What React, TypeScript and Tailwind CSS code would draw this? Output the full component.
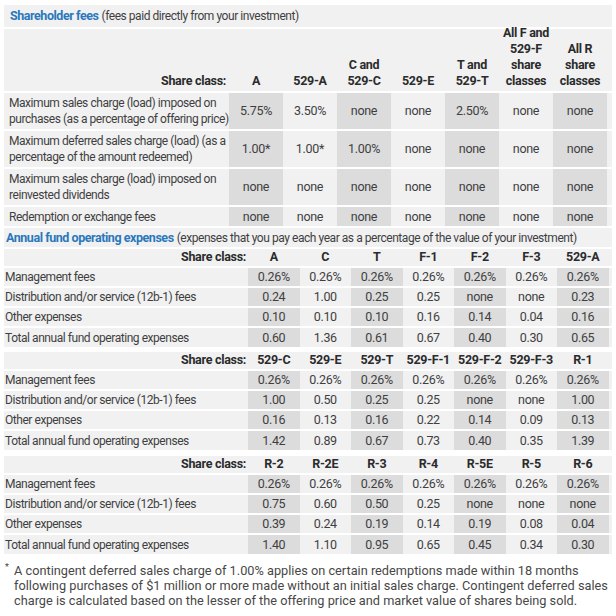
const feeHeaders = [
  ["A"],
  ["529-A"],
  ["C and", "529-C"],
  ["529-E"],
  ["T and", "529-T"],
  ["All F and", "529-F", "share", "classes"],
  ["All R", "share", "classes"],
];

const feeRows = [
  {
    label: ["Maximum sales charge (load) imposed on", "purchases (as a percentage of offering price)"],
    values: ["5.75%", "3.50%", "none", "none", "2.50%", "none", "none"],
  },
  {
    label: ["Maximum deferred sales charge (load) (as a", "percentage of the amount redeemed)"],
    values: ["1.00*", "1.00*", "1.00%", "none", "none", "none", "none"],
  },
  {
    label: ["Maximum sales charge (load) imposed on", "reinvested dividends"],
    values: ["none", "none", "none", "none", "none", "none", "none"],
  },
  {
    label: ["Redemption or exchange fees"],
    values: ["none", "none", "none", "none", "none", "none", "none"],
  },
];

const expenseLabels = [
  "Management fees",
  "Distribution and/or service (12b-1) fees",
  "Other expenses",
  "Total annual fund operating expenses",
];

const expenseTables = [
  {
    classes: ["A", "C", "T", "F-1", "F-2", "F-3", "529-A"],
    rows: [
      ["0.26%", "0.26%", "0.26%", "0.26%", "0.26%", "0.26%", "0.26%"],
      ["0.24", "1.00", "0.25", "0.25", "none", "none", "0.23"],
      ["0.10", "0.10", "0.10", "0.16", "0.14", "0.04", "0.16"],
      ["0.60", "1.36", "0.61", "0.67", "0.40", "0.30", "0.65"],
    ],
  },
  {
    classes: ["529-C", "529-E", "529-T", "529-F-1", "529-F-2", "529-F-3", "R-1"],
    rows: [
      ["0.26%", "0.26%", "0.26%", "0.26%", "0.26%", "0.26%", "0.26%"],
      ["1.00", "0.50", "0.25", "0.25", "none", "none", "1.00"],
      ["0.16", "0.13", "0.16", "0.22", "0.14", "0.09", "0.13"],
      ["1.42", "0.89", "0.67", "0.73", "0.40", "0.35", "1.39"],
    ],
  },
  {
    classes: ["R-2", "R-2E", "R-3", "R-4", "R-5E", "R-5", "R-6"],
    rows: [
      ["0.26%", "0.26%", "0.26%", "0.26%", "0.26%", "0.26%", "0.26%"],
      ["0.75", "0.60", "0.50", "0.25", "none", "none", "none"],
      ["0.39", "0.24", "0.19", "0.14", "0.19", "0.08", "0.04"],
      ["1.40", "1.10", "0.95", "0.65", "0.45", "0.34", "0.30"],
    ],
  },
];

function ExpenseTable({ classes, rows }: { classes: string[]; rows: string[][] }) {
  return (
    <div className="flex flex-col bg-[#f1f1f2]">
      {/* header row */}
      <div className="flex h-[19px] items-end pb-[1px] border-b-2 border-white text-[#2b2b2b] font-bold text-[12.5px] tracking-[-0.3px]">
        <div className="w-[244px] pr-[2px] text-right">Share class:</div>
        {classes.map((c) => (
          <div key={c} className="w-[51.5px] text-center">
            {c}
          </div>
        ))}
      </div>
      {rows.map((vals, r) => (
        <div key={r} className="flex h-[20px] border-b-2 border-white last:h-[19px] last:border-b-0">
          <div className="w-[244px] pl-[1px] flex items-center whitespace-nowrap">{expenseLabels[r]}</div>
          {vals.map((v, i) => (
            <div
              key={i}
              className={`w-[51.5px] flex items-center justify-center text-[12.5px] tracking-[-0.3px] ${i % 2 === 0 ? "bg-[#dcdcdd]" : ""}`}
            >
              {v}
            </div>
          ))}
        </div>
      ))}
    </div>
  );
}

export default function App() {
  return (
    <div className="w-[616px] h-[616px] bg-white pt-[5px] text-[12px] leading-[16px] tracking-[-0.45px] text-[#3f3f3f] font-['Roboto',sans-serif]">
      <div className="ml-[4px] w-[608px] bg-[#f1f1f2]">
        {/* Shareholder fees title */}
        <div className="h-[24px] flex items-center pl-[6px] border-b-2 border-white whitespace-nowrap">
          <span className="text-[#2a78bb] font-bold text-[12.5px] tracking-[-0.45px]">Shareholder fees</span>
          <span className="ml-[3px] text-[12px]">(fees paid directly from your investment)</span>
        </div>

        {/* share class header */}
        <div className="flex h-[64px] items-end pb-[2px] text-[#2b2b2b] font-bold text-[12.5px] tracking-[-0.3px] border-b-2 border-white">
          <div className="w-[225px] pr-[3px] text-right">Share class:</div>
          {feeHeaders.map((h, i) => (
            <div key={i} className="w-[54px] text-center leading-[16px]">
              {h.map((line) => (
                <div key={line}>{line}</div>
              ))}
            </div>
          ))}
        </div>

        {feeRows.map((row, r) => (
          <div
            key={r}
            className={`flex border-b-2 border-white ${row.label.length > 1 ? "h-[38px]" : "h-[21px]"}`}
          >
            <div className="w-[225px] pl-[5px] flex flex-col justify-center whitespace-nowrap">
              {row.label.map((l) => (
                <div key={l}>{l}</div>
              ))}
            </div>
            {row.values.map((v, i) => (
              <div
                key={i}
                className={`w-[54px] flex items-center justify-center text-[12.5px] tracking-[-0.3px] ${i % 2 === 0 ? "bg-[#dcdcdd]" : ""}`}
              >
                {v}
              </div>
            ))}
          </div>
        ))}

        {/* Annual fund operating expenses title */}
        <div className="h-[21px] flex items-center pl-[2px] border-b-2 border-white whitespace-nowrap">
          <span className="text-[#2a78bb] font-bold text-[12.5px] tracking-[-0.45px]">Annual fund operating expenses</span>
          <span className="ml-[3px] text-[12px]">
            (expenses that you pay each year as a percentage of the value of your investment)
          </span>
        </div>

        <div className="flex flex-col bg-white">
          <ExpenseTable classes={expenseTables[0].classes} rows={expenseTables[0].rows} />
          <div className="h-[5px]" />
          <ExpenseTable classes={expenseTables[1].classes} rows={expenseTables[1].rows} />
          <div className="h-[6px]" />
          <ExpenseTable classes={expenseTables[2].classes} rows={expenseTables[2].rows} />
        </div>
      </div>

      {/* footnote */}
      <div className="flex pl-[5px] pt-[9px] text-[12.75px] leading-[15px] tracking-normal text-[#474747]">
        <span className="w-[9px] text-[9px] leading-[9px]">*</span>
        <div className="whitespace-nowrap">
          <div>A contingent deferred sales charge of 1.00% applies on certain redemptions made within 18 months</div>
          <div>
            following purchases of $1 million or more made without an initial sales charge. Contingent deferred sales
          </div>
          <div>charge is calculated based on the lesser of the offering price and market value of shares being sold.</div>
        </div>
      </div>
    </div>
  );
}
